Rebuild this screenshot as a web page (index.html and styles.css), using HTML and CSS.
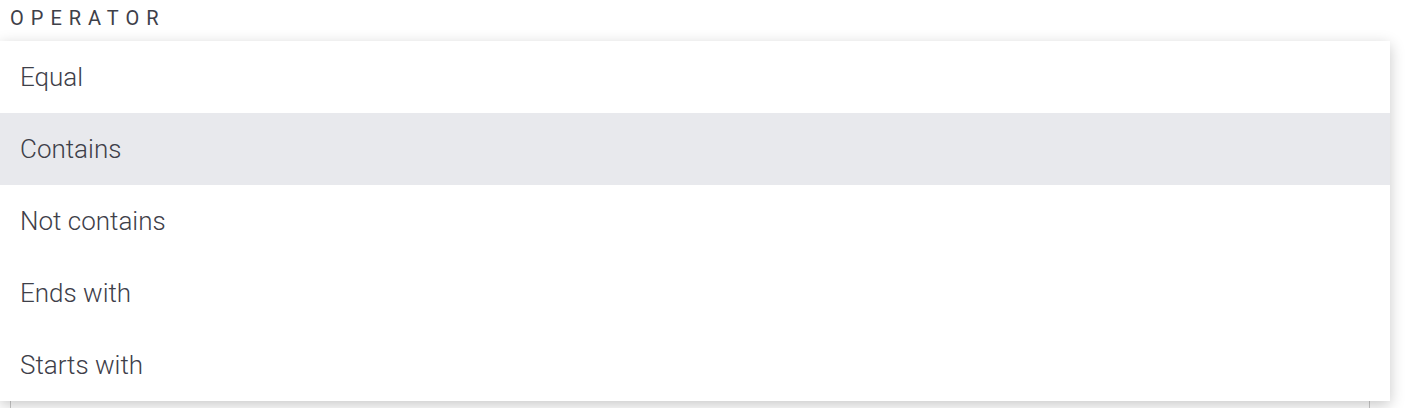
FILE: index.html
```html
<!DOCTYPE html>
<html>
<head>
<meta charset="utf-8">
<link rel="stylesheet" href="styles.css">
</head>
<body>
<div class="field">
  <div class="label">OPERATOR</div>
  <div class="select-wrap">
    <div class="select-box"></div>
    <ul class="menu">
      <li class="item">Equal</li>
      <li class="item active">Contains</li>
      <li class="item">Not contains</li>
      <li class="item">Ends with</li>
      <li class="item">Starts with</li>
    </ul>
  </div>
</div>
</body>
</html>
```
FILE: styles.css
```css
html, body {
  margin: 0;
  padding: 0;
  background: #ffffff;
  font-family: Roboto, "Liberation Sans", sans-serif;
  overflow: hidden;
}
.field {
  padding: 6px 38px 0 10px;
}
.label {
  font-size: 20px;
  letter-spacing: 7px;
  color: #3e4049;
  line-height: 24px;
  font-weight: 400;
}
.select-wrap {
  position: relative;
  margin-top: 11px;
}
.select-box {
  height: 400px;
  border: 1px solid #c9c9c9;
  border-radius: 2px;
  background: #fff;
}
.menu {
  position: absolute;
  top: 0;
  left: -10px;
  right: -20px;
  margin: 0;
  padding: 0;
  list-style: none;
  background: #fff;
  box-shadow: 0 4px 14px rgba(0, 0, 0, 0.22);
}
.item {
  height: 72px;
  display: flex;
  align-items: center;
  padding-left: 20px;
  font-size: 26px;
  font-weight: 300;
  color: #3e4049;
}
.item.active {
  background: #e8e9ed;
}
```
